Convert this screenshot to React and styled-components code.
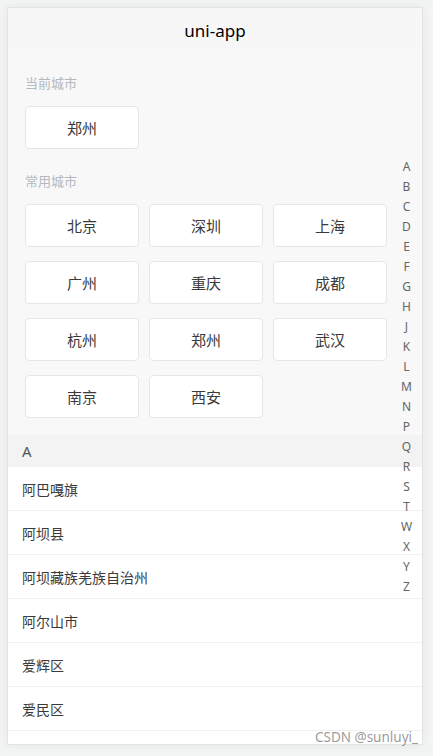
import React from "react";
import styled, { createGlobalStyle } from "styled-components";

const GlobalStyle = createGlobalStyle`
  html, body { margin: 0; padding: 0; background: #f2f3f3; }
  body { font-family: "Noto Sans", "Noto Sans CJK SC", sans-serif; }
  * { box-sizing: border-box; }
`;

const Page = styled.div`
  position: relative;
  padding: 7px;
  width: 433px;
  height: 756px;
`;

const Frame = styled.div`
  position: relative;
  width: 416px;
  height: 738px;
  border: 1px solid #e2e3e3;
  box-shadow: 0 0 8px rgba(0, 0, 0, 0.06);
  background: #f8f8f8;
  overflow: hidden;
  display: flex;
  flex-direction: column;
`;

const NavBar = styled.div`
  height: 44px;
  flex: none;
  background: #f7f7f7;
  display: flex;
  align-items: center;
  justify-content: center;
  font-size: 17px;
  color: #000;
`;

const Body = styled.div`
  flex: 1;
  overflow: hidden;
  display: flex;
  flex-direction: column;
`;

const Section = styled.div`
  padding: ${(p) => (p.$first ? "22px" : "23px")} 35px 0 17px;
`;

const Label = styled.div`
  font-size: 13px;
  line-height: 18px;
  color: #b5b9bf;
  margin-bottom: 14px;
`;

const Grid = styled.div`
  display: grid;
  grid-template-columns: repeat(3, 114px);
  column-gap: 10px;
  row-gap: 14px;
`;

const CityButton = styled.div`
  height: 43px;
  background: #fff;
  border: 1px solid #e6e6e6;
  border-radius: 4px;
  display: flex;
  align-items: center;
  justify-content: center;
  font-size: 15px;
  color: #3a3a3a;
`;

const GroupHeader = styled.div`
  margin-top: 17px;
  height: 32px;
  flex: none;
  background: #f3f3f3;
  display: flex;
  align-items: center;
  padding-left: 14px;
  font-size: 15px;
  color: #555;
`;

const List = styled.div`
  flex: 1;
  background: #fff;
`;

const Item = styled.div`
  height: 44px;
  border-bottom: 1px solid #f0f0f0;
  display: flex;
  align-items: center;
  padding-left: 14px;
  font-size: 14px;
  color: #3a3a3a;
`;

const IndexBar = styled.div`
  position: absolute;
  right: 0;
  top: 149px;
  width: 31px;
  display: flex;
  flex-direction: column;
  align-items: center;
`;

const Letter = styled.div`
  height: 20px;
  line-height: 20px;
  font-size: 12px;
  color: #666;
`;

const Watermark = styled.div`
  position: absolute;
  right: 15px;
  bottom: 11px;
  font-size: 13.5px;
  line-height: 16px;
  color: rgba(120, 120, 120, 0.75);
`;

const hot = ["北京", "深圳", "上海", "广州", "重庆", "成都", "杭州", "郑州", "武汉", "南京", "西安"];
const cities = ["阿巴嘎旗", "阿坝县", "阿坝藏族羌族自治州", "阿尔山市", "爱辉区", "爱民区"];
const letters = "ABCDEFGHJKLMNPQRSTWXYZ".split("");

export default function App() {
  return (
    <>
      <GlobalStyle />
      <Page>
        <Frame>
          <NavBar>uni-app</NavBar>
          <Body>
            <Section $first>
              <Label>当前城市</Label>
              <Grid>
                <CityButton>郑州</CityButton>
              </Grid>
            </Section>
            <Section>
              <Label>常用城市</Label>
              <Grid>
                {hot.map((c) => (
                  <CityButton key={c}>{c}</CityButton>
                ))}
              </Grid>
            </Section>
            <GroupHeader>A</GroupHeader>
            <List>
              {cities.map((c) => (
                <Item key={c}>{c}</Item>
              ))}
            </List>
          </Body>
          <IndexBar>
            {letters.map((l) => (
              <Letter key={l}>{l}</Letter>
            ))}
          </IndexBar>
        </Frame>
        <Watermark>CSDN @sunluyi_</Watermark>
      </Page>
    </>
  );
}
